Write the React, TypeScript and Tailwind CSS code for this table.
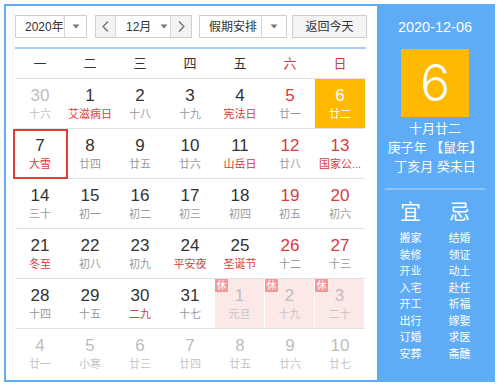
import React from "react";

type Day = {
  d: number;
  l: string;
  fest?: boolean; // red lunar/festival text
  red?: boolean; // weekend number
  other?: boolean; // not in this month
  hol?: boolean; // public holiday (休)
  today?: boolean;
  sel?: boolean;
};

const weeks: Day[][] = [
  [
    { d: 30, l: "十六", other: true },
    { d: 1, l: "艾滋病日", fest: true },
    { d: 2, l: "十八" },
    { d: 3, l: "十九" },
    { d: 4, l: "宪法日", fest: true },
    { d: 5, l: "廿一", red: true },
    { d: 6, l: "廿二", today: true },
  ],
  [
    { d: 7, l: "大雪", fest: true, sel: true },
    { d: 8, l: "廿四" },
    { d: 9, l: "廿五" },
    { d: 10, l: "廿六" },
    { d: 11, l: "山岳日", fest: true },
    { d: 12, l: "廿八", red: true },
    { d: 13, l: "国家公...", fest: true, red: true },
  ],
  [
    { d: 14, l: "三十" },
    { d: 15, l: "初一" },
    { d: 16, l: "初二" },
    { d: 17, l: "初三" },
    { d: 18, l: "初四" },
    { d: 19, l: "初五", red: true },
    { d: 20, l: "初六", red: true },
  ],
  [
    { d: 21, l: "冬至", fest: true },
    { d: 22, l: "初八" },
    { d: 23, l: "初九" },
    { d: 24, l: "平安夜", fest: true },
    { d: 25, l: "圣诞节", fest: true },
    { d: 26, l: "十二", red: true },
    { d: 27, l: "十三", red: true },
  ],
  [
    { d: 28, l: "十四" },
    { d: 29, l: "十五" },
    { d: 30, l: "二九", fest: true },
    { d: 31, l: "十七" },
    { d: 1, l: "元旦", other: true, hol: true },
    { d: 2, l: "十九", other: true, hol: true },
    { d: 3, l: "二十", other: true, hol: true },
  ],
  [
    { d: 4, l: "廿一", other: true },
    { d: 5, l: "小寒", other: true },
    { d: 6, l: "廿三", other: true },
    { d: 7, l: "廿四", other: true },
    { d: 8, l: "廿五", other: true },
    { d: 9, l: "廿六", other: true },
    { d: 10, l: "廿七", other: true },
  ],
];

const weekdays = ["一", "二", "三", "四", "五", "六", "日"];
const good = ["搬家", "装修", "开业", "入宅", "开工", "出行", "订婚", "安葬"];
const bad = ["结婚", "领证", "动土", "赴任", "祈福", "嫁娶", "求医", "斋醮"];

function Caret() {
  return (
    <svg width="8" height="5" viewBox="0 0 8 5">
      <path d="M0.5 0.5 L7.5 0.5 L4 4.5 Z" fill="#777" />
    </svg>
  );
}

function Chevron({ dir }: { dir: "l" | "r" }) {
  return (
    <svg width="7" height="11" viewBox="0 0 7 11">
      <path
        d={dir === "l" ? "M6 0.5 L1 5.5 L6 10.5" : "M1 0.5 L6 5.5 L1 10.5"}
        fill="none"
        stroke="#666"
        strokeWidth="1.1"
      />
    </svg>
  );
}

function Cell({ day }: { day: Day }) {
  let numColor = "text-[#333]";
  let lunColor = "text-[#999]";
  if (day.red) numColor = "text-[#dc3a40]";
  if (day.fest) lunColor = "text-[#dc3a40]";
  if (day.other) {
    numColor = "text-[#bdbdbd]";
    lunColor = "text-[#c4c4c4]";
  }
  if (day.today) {
    numColor = "text-white";
    lunColor = "text-white";
  }
  const bg = day.today ? "bg-[#ffb900]" : day.hol ? "bg-[#fde8e8] mr-px" : "";

  return (
    <div className="relative w-[50px] h-full">
      <div className={`h-full flex flex-col items-center pt-[8px] ${bg}`}>
        <div className={`text-[17px] leading-[18px] ${numColor}`}>{day.d}</div>
        <div className={`mt-[2px] text-[11px] leading-[15px] whitespace-nowrap ${lunColor}`}>{day.l}</div>
      </div>
      {day.hol && (
        <div className="absolute left-0 top-0 w-[13px] h-[13px] bg-[#f29a9a] text-white text-[10px] leading-[13px] text-center">
          休
        </div>
      )}
      {day.sel && (
        <div className="absolute -left-[2px] -right-[3px] top-0 -bottom-px border-2 border-[#e53b3b]" />
      )}
    </div>
  );
}

export default function App() {
  return (
    <div
      className="w-[499px] h-[385px] bg-white pt-[4px] pl-[4px]"
      style={{ fontFamily: '"Liberation Sans", "Noto Sans CJK SC", sans-serif' }}
    >
      <div className="flex w-[491px] h-[378px] border-2 border-[#62acf4]">
        {/* left: month grid */}
        <div className="w-[371px] pl-[9px] pt-[9px]">
          <div className="flex h-[23px] text-[12px] text-[#333]">
            <div className="flex w-[72px] border border-[#cfcfcf] bg-white">
              <div className="flex-1 flex items-center pl-[9px]">2020年</div>
              <div className="w-[22px] border-l border-[#d6d6d6] flex items-center justify-center">
                <Caret />
              </div>
            </div>
            <div className="flex ml-[8px] w-[97px] border border-[#cfcfcf]">
              <div className="w-[19px] bg-[#f3f3f3] flex items-center justify-center">
                <Chevron dir="l" />
              </div>
              <div className="flex-1 flex items-center gap-[9px] pl-[10px] border-x border-[#d6d6d6]">
                <span>12月</span>
                <Caret />
              </div>
              <div className="w-[20px] bg-[#f3f3f3] flex items-center justify-center">
                <Chevron dir="r" />
              </div>
            </div>
            <div className="flex ml-[7px] w-[88px] border border-[#cfcfcf]">
              <div className="flex-1 flex items-center pl-[9px]">假期安排</div>
              <div className="w-[25px] border-l border-[#d6d6d6] flex items-center justify-center">
                <Caret />
              </div>
            </div>
            <div className="ml-[5px] w-[75px] border border-[#cfcfcf] bg-[#f4f4f4] flex items-center justify-center">
              返回今天
            </div>
          </div>

          <div className="mt-[9px] w-[351px] h-[2px] bg-[#acd0f3]" />

          <div className="flex w-[350px] h-[30px] border-b border-[#e2e2e2] text-[13px]">
            {weekdays.map((w, i) => (
              <div
                key={w}
                className={`w-[50px] flex items-center justify-center ${i > 4 ? "text-[#d9363e]" : "text-[#333]"}`}
              >
                {w}
              </div>
            ))}
          </div>

          {weeks.map((week, r) => (
            <div
              key={r}
              className={`flex w-[350px] h-[50px] ${r < 5 ? "border-b border-[#e2e2e2]" : ""}`}
            >
              {week.map((day, c) => (
                <Cell key={c} day={day} />
              ))}
            </div>
          ))}
        </div>

        {/* right: today detail */}
        <div className="flex-1 bg-[#5eabf6] text-white flex flex-col items-center pt-[12px]">
          <div className="text-[14.5px] leading-[18px]">2020-12-06</div>
          <div
            className="mt-[13px] w-[68px] h-[68px] bg-[#ffb900] flex items-center justify-center text-[50px] leading-none font-light"
            style={{ fontFamily: 'Inter, "Liberation Sans", sans-serif' }}
          >
            6
          </div>
          <div className="mt-[2px] text-[13px] leading-[19px] text-center">
            <div>十月廿二</div>
            <div>庚子年 【鼠年】</div>
            <div>丁亥月 癸未日</div>
          </div>
          <div className="mt-[12px] w-[100px] h-[2px] bg-[#8cc4f8]" />
          <div className="mt-[10px] flex gap-px">
            <div className="w-[48px] flex flex-col items-center">
              <div className="text-[21px] leading-[24px]">宜</div>
              <div className="mt-[6px] text-[11px] leading-[16.5px] text-center">
                {good.map((g) => (
                  <div key={g}>{g}</div>
                ))}
              </div>
            </div>
            <div className="w-[48px] flex flex-col items-center">
              <div className="text-[21px] leading-[24px]">忌</div>
              <div className="mt-[6px] text-[11px] leading-[16.5px] text-center">
                {bad.map((g) => (
                  <div key={g}>{g}</div>
                ))}
              </div>
            </div>
          </div>
        </div>
      </div>
    </div>
  );
}
